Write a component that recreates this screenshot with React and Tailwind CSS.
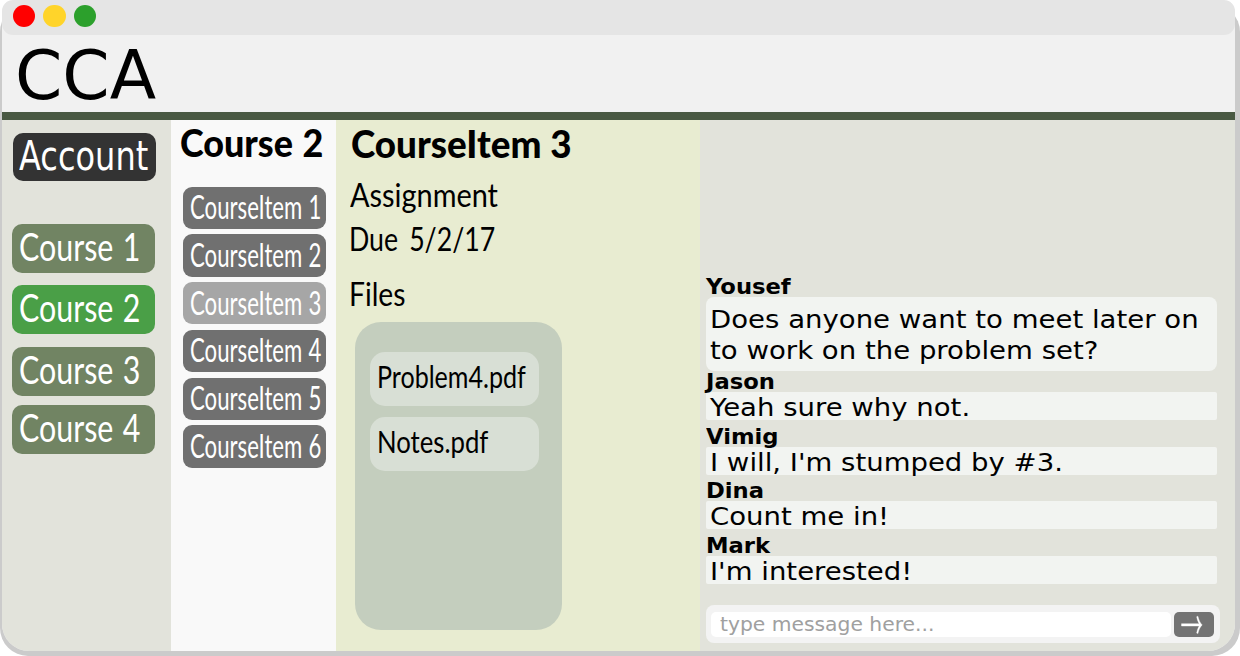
import clsx from 'clsx';

const courses = [
  { name: 'Course 1', gap: 'mt-[42.5px]' },
  { name: 'Course 2', gap: 'mt-[12.5px]', active: true },
  { name: 'Course 3', gap: 'mt-[12.5px]' },
  { name: 'Course 4', gap: 'mt-[9px]' },
];

const items = [1, 2, 3, 4, 5, 6];
const files = ['Problem4.pdf', 'Notes.pdf'];

const replies = [
  { author: 'Jason', text: 'Yeah sure why not.' },
  { author: 'Vimig', text: "I will, I'm stumped by #3." },
  { author: 'Dina', text: 'Count me in!' },
  { author: 'Mark', text: "I'm interested!" },
];

function Text({ className, children }) {
  return <span className={clsx('block w-max origin-left whitespace-pre', className)}>{children}</span>;
}

function Author({ children }) {
  return (
    <div className="h-5">
      <Text className="scale-x-[1.105] text-[20.5px] leading-[21px] font-bold">{children}</Text>
    </div>
  );
}

function TitleBar() {
  return (
    <div className="flex h-[34.5px] gap-[7.8px] rounded-[11px] bg-[#e5e5e5] pt-[4.7px] pl-[10.5px]">
      <span className="size-[22.8px] rounded-full bg-[#ff0000]" />
      <span className="size-[22.8px] rounded-full bg-[#ffd42a]" />
      <span className="size-[22.8px] rounded-full bg-[#2ca02c]" />
    </div>
  );
}

function Sidebar() {
  return (
    <nav className="w-[169px] bg-[#e2e3db] pt-[12.4px] pl-[10px] text-white">
      <button className="ml-[1px] block h-[48.6px] w-[143px] rounded-[10px] bg-[#333333] pl-[5.8px] text-left">
        <Text className="-mt-[2px] scale-x-[0.8] text-[40px] leading-[46px]">Account</Text>
      </button>
      {courses.map((c) => (
        <button
          key={c.name}
          className={clsx(
            'block h-[49px] w-[143px] rounded-[10px] pl-[7px] text-left font-[Lato,sans-serif] [word-spacing:2px]',
            c.gap,
            c.active ? 'bg-[#4a9f47]' : 'bg-[#718463]',
          )}
        >
          <Text className="-mt-[4px] scale-x-[0.8] text-[38px] leading-[43px]">{c.name}</Text>
        </button>
      ))}
    </nav>
  );
}

function ItemList() {
  return (
    <section className="w-[165px] bg-[#f9f9f9] pt-[0.5px] font-[Lato,sans-serif]">
      <h2 className="ml-[9.4px]">
        <Text className="scale-x-[0.945] text-[38px] leading-[42px] font-black [word-spacing:1px]">Course 2</Text>
      </h2>
      <div className="mt-[24px] ml-[12px] flex flex-col gap-[5.4px] text-white">
        {items.map((n) => (
          <button
            key={n}
            className={clsx(
              'h-[42.3px] w-[143px] rounded-[9px] pl-[6.8px] text-left',
              n === 3 ? 'bg-[#a6a6a6]' : 'bg-[#707070]',
            )}
          >
            <Text className="-mt-[3.4px] scale-x-[0.672] text-[33px] leading-[38px] [word-spacing:1px]">
              CourseItem {n}
            </Text>
          </button>
        ))}
      </div>
    </section>
  );
}

function Detail() {
  return (
    <section className="w-[364.4px] bg-[#e8ecd1] pt-[0.5px] pl-[14px] font-[Lato,sans-serif]">
      <h2>
        <Text className="ml-[0.8px] scale-x-[0.968] text-[38px] leading-[45px] font-black">CourseItem 3</Text>
      </h2>
      <Text className="mt-[9.5px] -ml-[0.5px] scale-x-[0.903] text-[32px] leading-[39px]">Assignment</Text>
      <Text className="mt-[5px] -ml-[0.8px] scale-x-[0.835] text-[32px] leading-[39px] [word-spacing:5px]">
        Due 5/2/17
      </Text>
      <Text className="mt-[16px] -ml-[0.8px] scale-x-[0.883] text-[32px] leading-[39px]">Files</Text>
      <div className="mt-[8.5px] ml-[4.5px] flex h-[308.5px] w-[207px] flex-col gap-[10.6px] rounded-[26px] bg-[#c4cebe] pt-[30px] pl-[15px]">
        {files.map((f, i) => (
          <div key={f} className="h-[54.3px] w-[169.5px] rounded-[15px] bg-[#d8dfd5] pl-[7px]">
            <Text
              className={clsx('text-[30px] leading-[48px]', i === 0 ? 'scale-x-[0.836]' : 'scale-x-[0.857]')}
            >
              {f}
            </Text>
          </div>
        ))}
      </div>
    </section>
  );
}

function Chat() {
  return (
    <section className="flex-1 bg-[#e2e3db] pt-[156.8px] pl-[5.8px]">
      <Author>Yousef</Author>
      <div className="h-[74px] w-[511px] rounded-[8px] bg-[#f2f4f1] pt-[7px] pl-[3.8px]">
        <Text className="scale-x-[1.102] text-[25px] leading-[31px]">
          {'Does anyone want to meet later on\nto work on the problem set?'}
        </Text>
      </div>
      <div className="mt-[1px] flex flex-col gap-[6.6px]">
        {replies.map((r) => (
          <div key={r.author}>
            <Author>{r.author}</Author>
            <div className="h-[28px] w-[511px] rounded-[2px] bg-[#f2f4f1] pl-[3.8px]">
              <Text className="scale-x-[1.101] text-[25px] leading-[31px]">{r.text}</Text>
            </div>
          </div>
        ))}
      </div>
      <div className="mt-[21.2px] flex h-[38px] w-[514px] gap-[3px] rounded-[8px] bg-[#f3f3f3] pt-[7.2px] pl-[5px]">
        <div className="h-[25px] w-[460px] rounded-[5px] bg-white pl-[9px] text-[#a0a0a0]">
          <Text className="scale-x-[1.014] text-[20px] leading-[24px]">type message here...</Text>
        </div>
        <button aria-label="Send" className="h-[25px] w-[40px] rounded-[5px] bg-[#737373]">
          <svg viewBox="0 0 40 25" className="block size-full" fill="white" stroke="white" strokeWidth="0.4">
            <path d="M7.5 11.7H25.2C24 9.8 23.1 7.5 22.7 4.7L23.9 4.2C24.7 7.9 26 10.8 28.2 12.9C26 15 24.7 17.9 23.9 21.6L22.7 21.1C23.1 18.3 24 15.9 25.2 14H7.5Z" />
          </svg>
        </button>
      </div>
    </section>
  );
}

export default function App() {
  return (
    <div className="relative h-[656px] w-[1240px] overflow-hidden bg-white font-['DejaVu_Sans',sans-serif] text-black">
      <div className="absolute inset-x-0 top-[4px] bottom-0 rounded-[28px] bg-[#cbcbcb]" />
      <div className="relative ml-[2px] flex h-[651px] w-[1232.5px] flex-col overflow-hidden rounded-t-[11px] rounded-b-[27px] bg-[#f1f1f1]">
        <TitleBar />
        <header className="h-[77.8px] pl-[13.2px]">
          <Text className="scale-x-[0.99] text-[68.5px] leading-[81px]">CCA</Text>
        </header>
        <div className="h-[8px] shrink-0 bg-[#495943]" />
        <main className="flex min-h-0 flex-1">
          <Sidebar />
          <ItemList />
          <Detail />
          <Chat />
        </main>
      </div>
    </div>
  );
}
